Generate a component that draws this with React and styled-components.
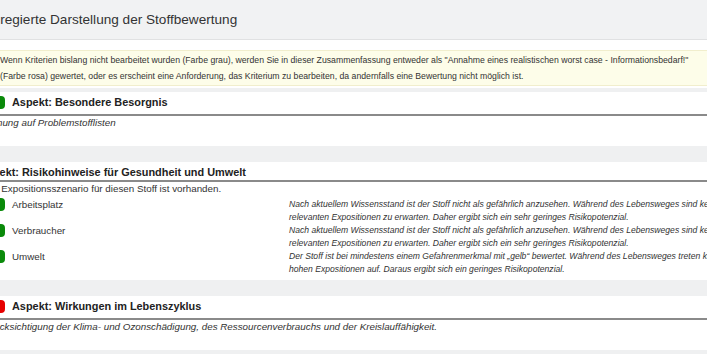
import React from 'react';
import styled, { createGlobalStyle } from 'styled-components';

const GlobalStyle = createGlobalStyle`
  html, body {
    margin: 0;
    padding: 0;
    background: #eff0f1;
    overflow: hidden;
  }
  body {
    font-family: "Liberation Sans", Arial, sans-serif;
    color: #333;
  }
`;

const items = [
  {
    label: 'Arbeitsplatz',
    text: 'Nach aktuellem Wissensstand ist der Stoff nicht als gefährlich anzusehen. Während des Lebensweges sind keine relevanten Expositionen zu erwarten. Daher ergibt sich ein sehr geringes Risikopotenzial.',
  },
  {
    label: 'Verbraucher',
    text: 'Nach aktuellem Wissensstand ist der Stoff nicht als gefährlich anzusehen. Während des Lebensweges sind keine relevanten Expositionen zu erwarten. Daher ergibt sich ein sehr geringes Risikopotenzial.',
  },
  {
    label: 'Umwelt',
    text: 'Der Stoff ist bei mindestens einem Gefahrenmerkmal mit „gelb“ bewertet. Während des Lebensweges treten keine hohen Expositionen auf. Daraus ergibt sich ein geringes Risikopotenzial.',
  },
];

const App = () => {
  return (
    <>
      <GlobalStyle />
      <Page>
        <TitleBar>
          <h1>Aggregierte Darstellung der Stoffbewertung</h1>
        </TitleBar>
        <NoticePanel>
          <Notice>
            Wenn Kriterien bislang nicht bearbeitet wurden (Farbe grau), werden Sie in dieser Zusammenfassung entweder als
            "Annahme eines realistischen worst case - Informationsbedarf!"
            <br />
            (Farbe rosa) gewertet, oder es erscheint eine Anforderung, das Kriterium zu bearbeiten, da andernfalls eine
            Bewertung nicht möglich ist.
          </Notice>
        </NoticePanel>

        <Panel $pad={17}>
          <Heading $badge>
            <Badge $color="green" />
            Aspekt: Besondere Besorgnis
          </Heading>
          <Description>Nennung auf Problemstofflisten</Description>
        </Panel>

        <Panel $pad={4}>
          <Heading>Aspekt: Risikohinweise für Gesundheit und Umwelt</Heading>
          <Intro>Kein Expositionsszenario für diesen Stoff ist vorhanden.</Intro>
          <ItemList>
            {items.map((it) => (
              <Item key={it.label}>
                <Label>
                  <Badge $color="green" />
                  {it.label}
                </Label>
                <ItemText>{it.text}</ItemText>
              </Item>
            ))}
          </ItemList>
        </Panel>

        <Panel $pad={17}>
          <Heading $badge>
            <Badge $color="red" />
            Aspekt: Wirkungen im Lebenszyklus
          </Heading>
          <Description>
            Berücksichtigung der Klima- und Ozonschädigung, des Ressourcenverbrauchs und der Kreislauffähigkeit.
          </Description>
        </Panel>
      </Page>
    </>
  );
};

const Page = styled.main`
  width: 1100px;
  margin-left: -24px;
  display: flex;
  flex-direction: column;
`;

const TitleBar = styled.header`
  height: 39px;
  background: #f1f2f3;
  border-bottom: 1px solid #e0e1e2;
  display: flex;
  align-items: center;

  h1 {
    margin: 0;
    font-size: 13.6px;
    font-weight: 400;
    color: #333;
  }
`;

const NoticePanel = styled.section`
  background: #fff;
  padding: 10px 0 2px;
  margin-bottom: 4px;
`;

const Notice = styled.div`
  background: #fdfde9;
  border: 1px solid #f1eecd;
  padding: 1px 0 1px 23px;
  font-size: 8.7px;
  line-height: 16px;
  color: #333;
`;

const Panel = styled.section`
  background: #fff;
  padding: 0 0 ${(p) => p.$pad}px 3px;
  margin-bottom: 16px;
`;

const Heading = styled.h2`
  margin: 0;
  display: flex;
  align-items: center;
  gap: 7px;
  padding: 2px 0 ${(p) => (p.$badge ? 4 : 0)}px;
  font-size: 10.9px;
  line-height: 16px;
  font-weight: 700;
  color: #222;
  border-bottom: 2px solid #8a8a8a;
`;

const Badge = styled.span`
  display: inline-block;
  width: 26px;
  height: 13px;
  border-radius: 4px;
  flex-shrink: 0;
  background: ${(p) => (p.$color === 'red' ? '#e60000' : '#0a8a0a')};
`;

const Description = styled.p`
  margin: 0;
  font-size: 9.8px;
  line-height: 13px;
  font-style: italic;
  color: #333;
`;

const Intro = styled.p`
  margin: 0;
  font-size: 9.8px;
  line-height: 14px;
`;

const ItemList = styled.div`
  display: flex;
  flex-direction: column;
  margin-top: 2px;
`;

const Item = styled.div`
  display: grid;
  grid-template-columns: 310px 450px;
  height: 26px;
`;

const Label = styled.div`
  display: flex;
  align-items: center;
  gap: 7px;
  height: 13px;
  font-size: 9.8px;
  line-height: 13px;
`;

const ItemText = styled.div`
  font-size: 8.6px;
  line-height: 13px;
  font-style: italic;
  color: #333;
`;

export default App;
